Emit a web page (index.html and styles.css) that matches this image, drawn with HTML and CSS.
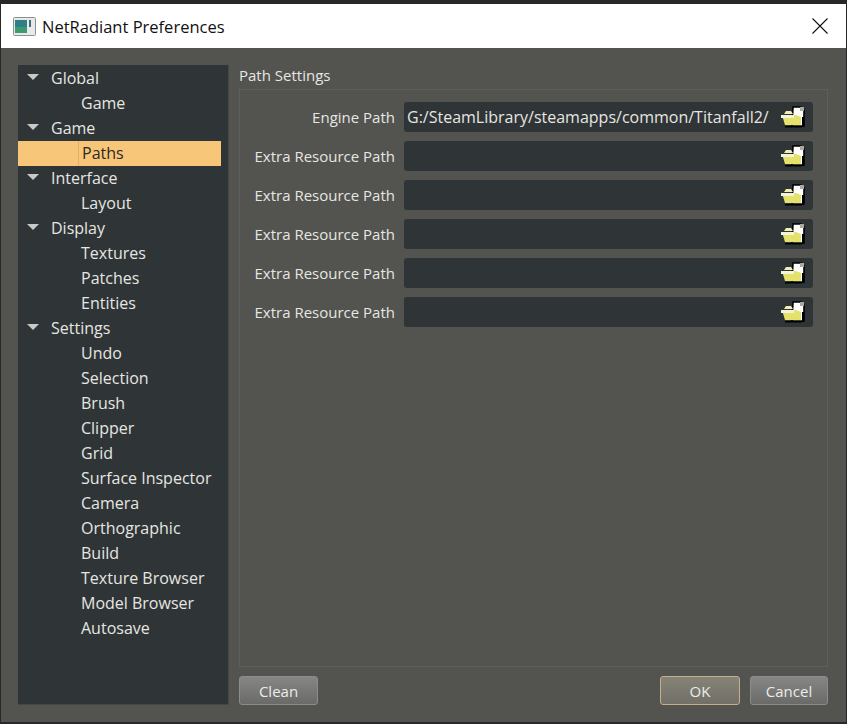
FILE: index.html
```html
<!DOCTYPE html>
<html lang="en">
<head>
    <meta charset="UTF-8">
    <title>NetRadiant Preferences</title>
    <link rel="stylesheet" href="styles.css">
</head>
<body>
    <svg class="defs" width="0" height="0">
        <symbol id="folder" viewBox="0 0 24 22">
            <path d="M12 1h8l3 3v16H11z" fill="#fff" stroke="#000" stroke-width="1.6"/>
            <path d="M19 1h4v4h-4z" fill="#a9a9a0"/>
            <path d="M3 8l2-3h5l2 3z" fill="#f1efb4"/>
            <path d="M1 9h14l5 2v8H4z" fill="#e4e26a"/>
            <path d="M0 9h13v3H0z" fill="#f4f2d8"/>
            <path d="M4 20h17v1.5H4z" fill="#000"/>
            <path d="M21 11h2v10h-2z" fill="#000"/>
        </symbol>
    </svg>
    <div class="window">
        <div class="titlebar">
            <svg class="app-icon" width="23" height="19" viewBox="0 0 23 19">
                <rect x="0.5" y="0.5" width="22" height="18" rx="1" fill="#e8eaea" stroke="#8b8f90"/>
                <rect x="2" y="3" width="12" height="13" fill="#2f7f88"/>
                <rect x="2" y="10" width="12" height="6" fill="#3f9a70"/>
                <rect x="16" y="3" width="2" height="7" fill="#3c6d78"/>
            </svg>
            <span class="title">NetRadiant Preferences</span>
            <svg class="close" width="16" height="16" viewBox="0 0 16 16">
                <path d="M0.5 0.5L15.5 15.5M15.5 0.5L0.5 15.5" stroke="#111" stroke-width="1.1"/>
            </svg>
        </div>
        <div class="content">
            <ul class="tree">
                <li class="group"><i></i>Global</li>
                <li class="leaf">Game</li>
                <li class="group"><i></i>Game</li>
                <li class="leaf selected"><span>Paths</span></li>
                <li class="group"><i></i>Interface</li>
                <li class="leaf">Layout</li>
                <li class="group"><i></i>Display</li>
                <li class="leaf">Textures</li>
                <li class="leaf">Patches</li>
                <li class="leaf">Entities</li>
                <li class="group"><i></i>Settings</li>
                <li class="leaf">Undo</li>
                <li class="leaf">Selection</li>
                <li class="leaf">Brush</li>
                <li class="leaf">Clipper</li>
                <li class="leaf">Grid</li>
                <li class="leaf">Surface Inspector</li>
                <li class="leaf">Camera</li>
                <li class="leaf">Orthographic</li>
                <li class="leaf">Build</li>
                <li class="leaf">Texture Browser</li>
                <li class="leaf">Model Browser</li>
                <li class="leaf">Autosave</li>
            </ul>
            <div class="main">
                <div class="group-title">Path Settings</div>
                <div class="group-box">
                    <div class="path-row">
                        <label>Engine Path</label>
                        <div class="path-input">
                            <span>G:/SteamLibrary/steamapps/common/Titanfall2/</span>
                            <svg class="folder"><use href="#folder"/></svg>
                        </div>
                    </div>
                    <div class="path-row">
                        <label>Extra Resource Path</label>
                        <div class="path-input"><span></span><svg class="folder"><use href="#folder"/></svg></div>
                    </div>
                    <div class="path-row">
                        <label>Extra Resource Path</label>
                        <div class="path-input"><span></span><svg class="folder"><use href="#folder"/></svg></div>
                    </div>
                    <div class="path-row">
                        <label>Extra Resource Path</label>
                        <div class="path-input"><span></span><svg class="folder"><use href="#folder"/></svg></div>
                    </div>
                    <div class="path-row">
                        <label>Extra Resource Path</label>
                        <div class="path-input"><span></span><svg class="folder"><use href="#folder"/></svg></div>
                    </div>
                    <div class="path-row">
                        <label>Extra Resource Path</label>
                        <div class="path-input"><span></span><svg class="folder"><use href="#folder"/></svg></div>
                    </div>
                </div>
                <div class="buttons">
                    <button class="btn clean">Clean</button>
                    <button class="btn ok">OK</button>
                    <button class="btn cancel">Cancel</button>
                </div>
            </div>
        </div>
    </div>
</body>
</html>
```

FILE: styles.css
```css
html, body {
    margin: 0;
    height: 100%;
    background-color: #26282a;
    overflow: hidden;
}
body {
    font-family: "Open Sans", "Noto Sans", sans-serif;
    font-size: 16px;
    color: #e6e6e2;
}
.defs {
    display: block;
}
.window {
    margin: 4px 1px 0;
    height: 718px;
    background-color: #535350;
    display: flex;
    flex-direction: column;
}
.titlebar {
    height: 44px;
    flex: none;
    background-color: #fff;
    display: flex;
    align-items: center;
    padding: 0 18px 0 12px;
    color: #111;
}
.app-icon {
    margin-right: 6px;
}
.title {
    flex: 1;
    font-size: 16.5px;
}
.content {
    flex: 1;
    display: flex;
    padding: 17px 18px 17px 17px;
    gap: 10px;
}
.tree {
    width: 211px;
    box-sizing: border-box;
    margin: 0;
    padding: 1px 0 0;
    list-style: none;
    background-color: #2f3436;
    border: 1px solid #474846;
    border-left: 0;
    border-top: 0;
}
.tree li {
    height: 25px;
    line-height: 24px;
    white-space: nowrap;
}
.group {
    padding-left: 33px;
    position: relative;
}
.group i {
    position: absolute;
    left: 9px;
    top: 8px;
    border-left: 6px solid transparent;
    border-right: 6px solid transparent;
    border-top: 6px solid #c9c9c5;
}
.leaf {
    padding-left: 63px;
}
.leaf.selected {
    width: 203px;
    box-sizing: border-box;
    background-color: #f8c678;
    color: #2a2a26;
    padding-left: 0;
}
.leaf.selected span {
    display: block;
    height: 25px;
    margin-left: 60px;
    padding-left: 3px;
    border-left: 1px solid #e0b36c;
}
.main {
    flex: 1;
    display: flex;
    flex-direction: column;
}
.group-title {
    height: 24px;
    line-height: 20px;
    font-size: 15px;
}
.group-box {
    flex: 1;
    border: 1px solid #5e5e5b;
    padding: 12px 14px 0 0;
    display: flex;
    flex-direction: column;
    gap: 9px;
}
.path-row {
    display: flex;
    align-items: center;
    height: 30px;
}
.path-row label {
    width: 155px;
    text-align: right;
    margin-right: 9px;
    font-size: 15px;
}
.path-input {
    flex: 1;
    height: 30px;
    background-color: #2f3436;
    border-radius: 3px;
    display: flex;
    align-items: center;
    padding: 0 8px 0 3px;
}
.path-input span {
    flex: 1;
}
.folder {
    width: 24px;
    height: 22px;
}
.buttons {
    display: flex;
    gap: 10px;
    margin-top: 9px;
}
.btn {
    height: 29px;
    padding: 0;
    font-family: inherit;
    font-size: 15px;
    color: #ecece8;
    background: linear-gradient(#868685, #6a6a69);
    border: 1px solid #8c8c8a;
    border-radius: 3px;
}
.clean {
    width: 79px;
    margin-right: auto;
}
.ok {
    width: 80px;
    background: linear-gradient(#868478, #716f66);
    border-color: #c4ae8c;
}
.cancel {
    width: 78px;
}
```
